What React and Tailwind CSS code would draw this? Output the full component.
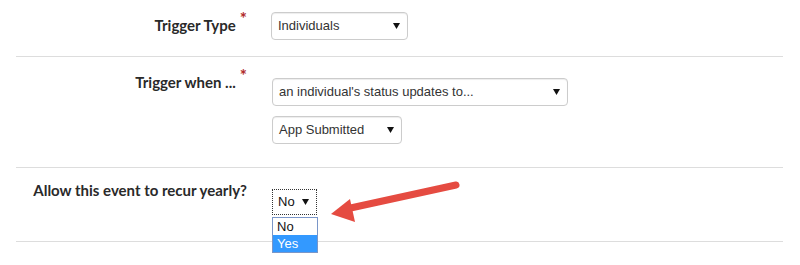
import { useState } from 'react';

function Caret() {
  return (
    <svg className="w-[7px] h-[6px] shrink-0" viewBox="0 0 7 6">
      <path d="M0 0h7L3.5 6z" fill="#111" />
    </svg>
  );
}

function FakeSelect({ value, width }) {
  return (
    <div
      className={`${width} h-[28px] flex items-center justify-between pl-[6px] pr-[7px] border border-[#ccc] rounded-[4px] bg-white shadow-[inset_0_1px_1px_rgba(0,0,0,0.075)] text-[13px] text-[#333] font-['Liberation_Sans',Arial,sans-serif]`}
    >
      <span>{value}</span>
      <Caret />
    </div>
  );
}

function Label({ text, required, className = '' }) {
  return (
    <div className={`w-[231px] shrink-0 text-right font-bold text-[15px] leading-5 text-[#2a2a2a] ${className}`}>
      {text}
      {required && <span className="relative -top-[6px] ml-[4px] text-[17px] text-[#b02a2a]">*</span>}
    </div>
  );
}

export default function App() {
  const [recur] = useState('No');

  return (
    <div className="relative w-[800px] h-[265px] overflow-hidden bg-white font-['Lato',sans-serif]">
      <div className="ml-4 mr-[17px]">
        <div className="flex h-[57px] pt-3 border-b border-[#ddd]">
          <Label text="Trigger Type" required className="pt-[3px]" />
          <div className="ml-6">
            <FakeSelect value="Individuals" width="w-[137px]" />
          </div>
        </div>

        <div className="flex h-[111px] pt-[21px] border-b border-[#ddd]">
          <Label text="Trigger when ..." required className="-mt-[6px]" />
          <div className="ml-[25px] flex flex-col gap-[10px]">
            <FakeSelect value="an individual's status updates to..." width="w-[296px]" />
            <FakeSelect value="App Submitted" width="w-[130px]" />
          </div>
        </div>

        <div className="relative flex h-[74px] pt-3 border-b border-[#ddd]">
          <Label text="Allow this event to recur yearly?" />
          <div className="ml-[25px] mt-[9px]">
            <div className="w-[45px] h-[26px] flex items-center justify-between pl-[5px] pr-[7px] border border-dotted border-[#333] bg-white text-[13px] text-[#111] font-['Liberation_Sans',Arial,sans-serif]">
              <span>{recur}</span>
              <Caret />
            </div>
          </div>
        </div>
      </div>

      {/* open dropdown list */}
      <div className="absolute left-[272px] top-[217px] w-[46px] border border-[#7a96c8] bg-white text-[13px] leading-[17px] font-['Liberation_Sans',Arial,sans-serif]">
        <div className="pl-[4px] text-[#111]">No</div>
        <div className="pl-[4px] bg-[#3399ff] text-white">Yes</div>
      </div>

      {/* annotation arrow */}
      <svg className="absolute left-0 top-0 pointer-events-none" width="800" height="265">
        <line x1="456" y1="185" x2="346" y2="209" stroke="#e54b41" strokeWidth="7" strokeLinecap="round" />
        <polygon points="331,214 350,199 355,222" fill="#e54b41" />
      </svg>
    </div>
  );
}
